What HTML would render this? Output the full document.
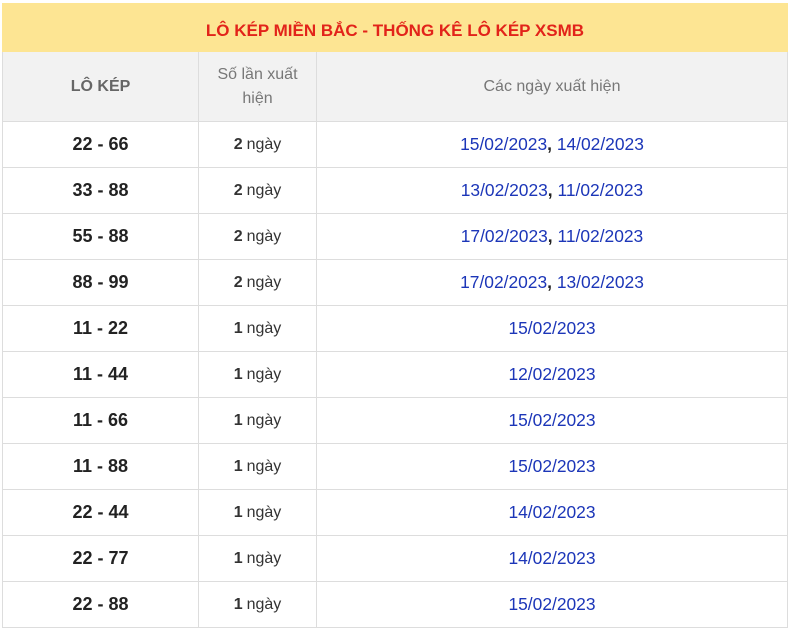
<!DOCTYPE html>
<html><head><meta charset="utf-8"><style>
body{margin:0;background:#fff;font-family:"Liberation Sans",Arial,sans-serif;width:793px;height:631px;overflow:hidden;position:relative}
.t{position:absolute;left:2px;top:3px;width:786px;height:49px;background:#fde593;color:#e2231a;font-weight:bold;font-size:17px;text-align:center;line-height:55px}
.h{position:absolute;left:2px;top:52px;width:786px;height:70px;background:#f2f2f2;border-bottom:1px solid #ddd;box-sizing:border-box;border-left:1px solid #ddd;border-right:1px solid #ddd}
.c{position:absolute;top:0;height:100%;display:flex;align-items:center;justify-content:center;text-align:center;box-sizing:border-box}
.r{position:absolute;left:2px;width:786px;height:46px;border-bottom:1px solid #ddd;box-sizing:border-box;border-left:1px solid #ddd;border-right:1px solid #ddd}
.a{left:0;width:196px;border-right:1px solid #ddd;font-weight:bold;font-size:18px;color:#222}
.b{left:196px;width:118px;border-right:1px solid #ddd;font-size:16px;color:#333}
.b b{margin-right:4px}
.d{left:314px;width:470px;font-size:17.4px;color:#1c36b8}
.d b{color:#222}
.h .a{color:#666;font-size:16px}
.h .b{color:#777;font-size:16px;line-height:24px;padding-top:1px}
.h .d{color:#777;font-size:16px}
</style></head><body>
<div class="t">LÔ KÉP MIỀN BẮC - THỐNG KÊ LÔ KÉP XSMB</div>
<div class="h"><div class="c a">LÔ KÉP</div><div class="c b">Số lần xuất<br>hiện</div><div class="c d">Các ngày xuất hiện</div></div>
<div class="r" style="top:122px"><div class="c a">22 - 66</div><div class="c b"><b>2</b>ngày</div><div class="c d">15/02/2023<b>,</b>&nbsp;14/02/2023</div></div>
<div class="r" style="top:168px"><div class="c a">33 - 88</div><div class="c b"><b>2</b>ngày</div><div class="c d">13/02/2023<b>,</b>&nbsp;11/02/2023</div></div>
<div class="r" style="top:214px"><div class="c a">55 - 88</div><div class="c b"><b>2</b>ngày</div><div class="c d">17/02/2023<b>,</b>&nbsp;11/02/2023</div></div>
<div class="r" style="top:260px"><div class="c a">88 - 99</div><div class="c b"><b>2</b>ngày</div><div class="c d">17/02/2023<b>,</b>&nbsp;13/02/2023</div></div>
<div class="r" style="top:306px"><div class="c a">11 - 22</div><div class="c b"><b>1</b>ngày</div><div class="c d">15/02/2023</div></div>
<div class="r" style="top:352px"><div class="c a">11 - 44</div><div class="c b"><b>1</b>ngày</div><div class="c d">12/02/2023</div></div>
<div class="r" style="top:398px"><div class="c a">11 - 66</div><div class="c b"><b>1</b>ngày</div><div class="c d">15/02/2023</div></div>
<div class="r" style="top:444px"><div class="c a">11 - 88</div><div class="c b"><b>1</b>ngày</div><div class="c d">15/02/2023</div></div>
<div class="r" style="top:490px"><div class="c a">22 - 44</div><div class="c b"><b>1</b>ngày</div><div class="c d">14/02/2023</div></div>
<div class="r" style="top:536px"><div class="c a">22 - 77</div><div class="c b"><b>1</b>ngày</div><div class="c d">14/02/2023</div></div>
<div class="r" style="top:582px"><div class="c a">22 - 88</div><div class="c b"><b>1</b>ngày</div><div class="c d">15/02/2023</div></div>
</body></html>
